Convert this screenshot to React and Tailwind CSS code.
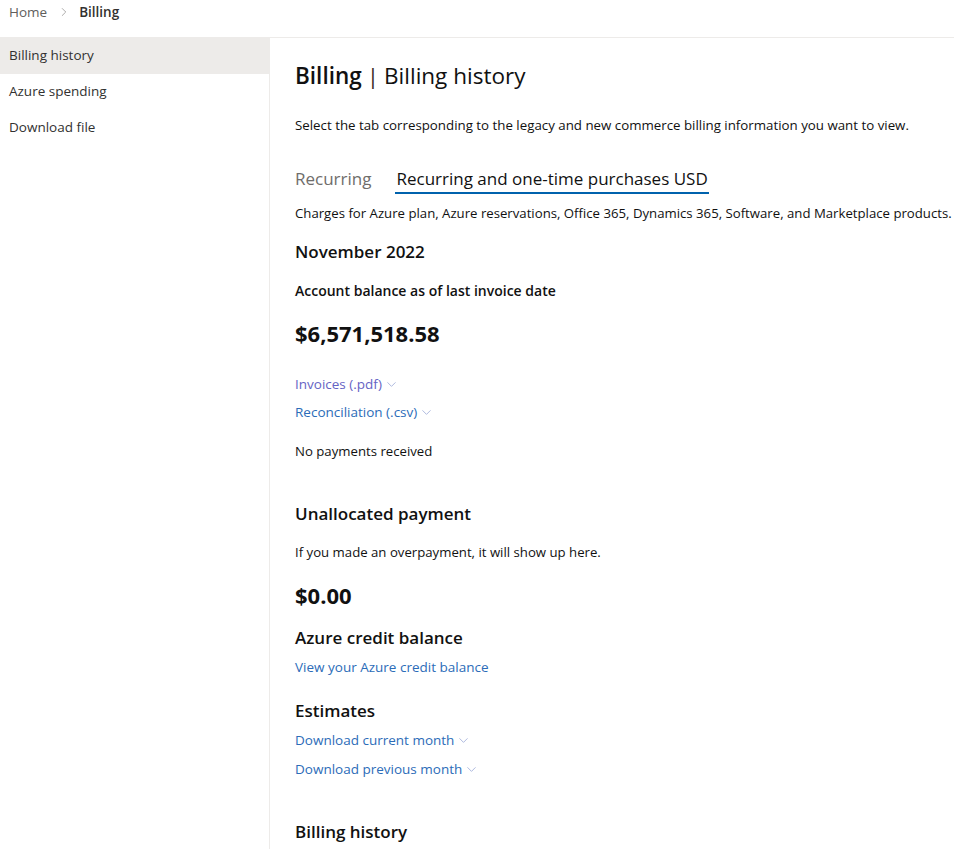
import { ChevronRight, ChevronDown } from 'lucide-react';

const NAV = ['Billing history', 'Azure spending', 'Download file'];

function DropLink({ children, color = 'text-[#2c6cb8]' }) {
  return (
    <a className={`inline-flex items-center gap-[2px] text-[13.5px] ${color}`}>
      {children}
      <ChevronDown size={15} strokeWidth={1.1} className="text-[#8a9ad0]" />
    </a>
  );
}

export default function App() {
  return (
    <div className="min-h-[849px] bg-white text-[#111] font-['Open_Sans',sans-serif] flex flex-col overflow-hidden">
      <header className="h-[38px] border-b border-[#edebe9] flex items-center pl-[9px] pb-[13px] text-[13.5px]">
        <span className="text-[#605e5c]">Home</span>
        <ChevronRight size={14} strokeWidth={1.2} className="ml-[10px] mr-[8px] text-[#8a8886]" />
        <span className="font-semibold text-[#323130]">Billing</span>
      </header>

      <div className="flex flex-1">
        <nav className="w-[270px] shrink-0 border-r border-[#edebe9]">
          {NAV.map((n, i) => (
            <div
              key={n}
              className={`h-[36px] flex items-center pl-[9px] pb-[1px] text-[13.5px] text-[#323130] ${i === 0 ? 'bg-[#edebe9]' : ''}`}
            >
              {n}
            </div>
          ))}
        </nav>

        <main className="flex-1 pl-[25px] pt-[22px] whitespace-nowrap">
          <h1 className="text-[22.5px] leading-[32px] text-[#111]">
            <span className="font-semibold">Billing</span>
            <span className="mx-[5px] text-[#3b1f1f]">|</span>
            <span>Billing history</span>
          </h1>

          <p className="mt-[23px] text-[13.3px] leading-[20px]">
            Select the tab corresponding to the legacy and new commerce billing information you want to view.
          </p>

          <div className="mt-[32px] flex gap-[24px] text-[17px] leading-[24px]">
            <span className="text-[#6f6d6b]">Recurring</span>
            <span className="border-b-2 border-[#0062ad] pb-[1px] px-[1px]">Recurring and one-time purchases USD</span>
          </div>

          <p className="mt-[9px] text-[13.2px] leading-[20px]">
            Charges for Azure plan, Azure reservations, Office 365, Dynamics 365, Software, and Marketplace products.
          </p>

          <h2 className="mt-[17px] text-[17px] leading-[24px] font-semibold">November 2022</h2>
          <p className="mt-[16px] text-[14px] leading-[22px] font-semibold">Account balance as of last invoice date</p>
          <p className="mt-[16px] text-[22px] leading-[30px] font-bold">$6,571,518.58</p>

          <div className="mt-[26px] flex flex-col items-start gap-[8px] leading-[20px]">
            <DropLink color="text-[#6563c4]">Invoices (.pdf)</DropLink>
            <DropLink>Reconciliation (.csv)</DropLink>
          </div>

          <p className="mt-[19px] text-[13.2px] leading-[20px]">No payments received</p>

          <h2 className="mt-[41px] text-[17px] leading-[24px] font-semibold">Unallocated payment</h2>
          <p className="mt-[16px] text-[13.2px] leading-[20px]">If you made an overpayment, it will show up here.</p>
          <p className="mt-[18px] text-[22px] leading-[30px] font-bold">$0.00</p>

          <h2 className="mt-[16px] text-[17px] leading-[24px] font-semibold">Azure credit balance</h2>
          <a className="block mt-[7px] text-[13.5px] leading-[20px] text-[#2c6cb8]">View your Azure credit balance</a>

          <h2 className="mt-[22px] text-[17px] leading-[24px] font-semibold">Estimates</h2>
          <div className="mt-[7px] flex flex-col items-start gap-[9px] leading-[20px]">
            <DropLink>Download current month</DropLink>
            <DropLink>Download previous month</DropLink>
          </div>

          <h2 className="mt-[41px] text-[17px] leading-[24px] font-semibold">Billing history</h2>
        </main>
      </div>
    </div>
  );
}
